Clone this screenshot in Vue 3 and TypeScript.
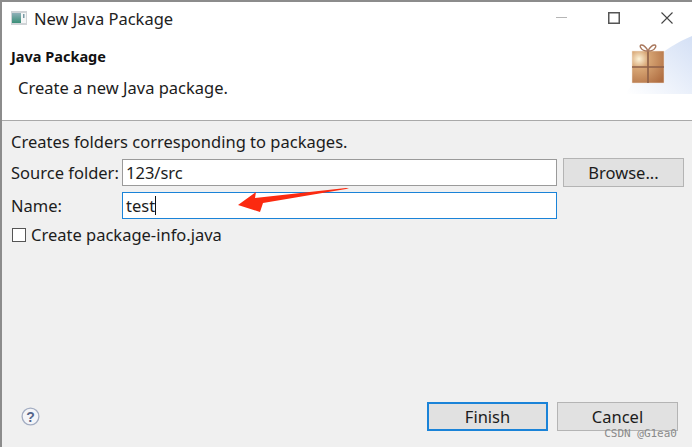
<template>
  <div class="dialog">
    <div class="titlebar">
      <svg class="app-icon" width="16" height="14" viewBox="0 0 16 14">
        <defs>
          <linearGradient id="pane" x1="0" y1="0" x2="0" y2="1">
            <stop offset="0" stop-color="#8fb0b8" />
            <stop offset="1" stop-color="#3a8f78" />
          </linearGradient>
        </defs>
        <rect x="0" y="0" width="16" height="14" fill="#cfd3d6" />
        <rect x="1" y="2" width="9" height="10" fill="url(#pane)" />
        <rect x="10" y="2" width="5" height="10" fill="#f4f6f6" />
        <rect x="12" y="3" width="1.5" height="4" fill="#7b9aa5" />
      </svg>
      <span class="title">New Java Package</span>
      <div class="win-buttons">
        <svg width="11" height="12" viewBox="0 0 11 12"><path d="M0 5.5H11" stroke="#b5b5b5" stroke-width="1" fill="none" /></svg>
        <svg width="12" height="12" viewBox="0 0 12 12"><rect x="0.75" y="0.75" width="10.5" height="10.5" fill="none" stroke="#555" stroke-width="1.5" /></svg>
        <svg width="12" height="12" viewBox="0 0 12 12"><path d="M0.5 0.5L11.5 11.5M11.5 0.5L0.5 11.5" stroke="#444" stroke-width="1.1" fill="none" /></svg>
      </div>
    </div>

    <div class="banner">
      <div class="banner-text">
        <h1>Java Package</h1>
        <p>Create a new Java package.</p>
      </div>
      <svg class="banner-art" width="66" height="60" viewBox="0 0 66 60">
        <defs>
          <linearGradient id="fade" x1="0" y1="1" x2="1" y2="0">
            <stop offset="0" stop-color="#ffffff" />
            <stop offset="1" stop-color="#d4e0f5" />
          </linearGradient>
          <radialGradient id="box" cx="0.22" cy="0.25" r="0.95">
            <stop offset="0" stop-color="#fdf3d8" />
            <stop offset="0.3" stop-color="#d9a877" />
            <stop offset="1" stop-color="#b06e42" />
          </radialGradient>
        </defs>
        <path d="M0 58C12 36 36 12 66 0V58Z" fill="url(#fade)" />
        <rect x="6" y="15" width="32" height="32" fill="url(#box)" stroke="#f3e6da" stroke-width="0.5" />
        <path d="M22 15V47M6 31H38" stroke="#8d5f48" stroke-width="1.6" fill="none" />
        <path d="M22 15C18 7 12 8 15 12C16 14 19 15 22 15C25 15 28 14 29 12C32 8 26 7 22 15Z" fill="none" stroke="#a8775c" stroke-width="1.4" />
      </svg>
    </div>

    <div class="body">
      <p class="intro">Creates folders corresponding to packages.</p>
      <div class="form">
        <label>Source folder:</label>
        <div class="field">123/src</div>
        <button class="btn browse">Browse...</button>
        <label>Name:</label>
        <div class="field focused">test<i class="caret"></i></div>
      </div>
      <div class="check">
        <span class="box"></span>
        <span>Create package-info.java</span>
      </div>

      <div class="footer">
        <svg class="help" width="19" height="19" viewBox="0 0 19 19">
          <circle cx="9.5" cy="9.5" r="8.4" fill="#f4f5f8" stroke="#a3adc2" stroke-width="1.3" />
          <text x="9.5" y="14.5" text-anchor="middle" class="help-mark">?</text>
        </svg>
        <div class="actions">
          <button class="btn primary">Finish</button>
          <button class="btn">Cancel</button>
        </div>
      </div>
    </div>

    <svg class="arrow" width="112" height="26" viewBox="0 0 112 26">
      <path d="M0 17L18 4L17 10L108 0L111 0.5L25 15L22 24Z" fill="#fb2a10" />
    </svg>
    <span class="watermark">CSDN @G1ea0</span>
  </div>
</template>

<script setup lang="ts">
</script>

<style>
html, body { margin: 0; background: #f0f0f0; }
</style>

<style scoped>
.dialog {
  position: relative;
  width: 692px;
  height: 447px;
  box-sizing: border-box;
  border-top: 2px solid #8c8c8c;
  border-left: 2px solid #8c8c8c;
  background: #f0f0f0;
  font-family: "Noto Sans", "Open Sans", sans-serif;
  font-size: 16.5px;
  color: #1c1c1c;
  overflow: hidden;
  display: flex;
  flex-direction: column;
}
.titlebar {
  height: 34px;
  box-sizing: border-box;
  padding: 0 0 2px 9px;
  background: #fff;
  display: flex;
  align-items: center;
  flex: none;
}
.app-icon { flex: none; }
.title { margin-left: 7px; color: #222; }
.win-buttons {
  margin-left: auto;
  display: flex;
  gap: 41px;
  padding-right: 19px;
}
.banner {
  height: 84px;
  background: #fff;
  border-bottom: 1px solid #a9a9a9;
  display: flex;
  flex: none;
  justify-content: space-between;
}
.banner-text { padding-left: 9px; }
h1 { margin: 9px 0 0; font-size: 14.5px; font-weight: 700; line-height: 22px; color: #111; }
p { margin: 0; }
.banner-text p { margin: 10px 0 0 7px; line-height: 22px; }
.banner-art { flex: none; }
.body {
  flex: 1;
  display: flex;
  flex-direction: column;
  padding: 10px 14px 16px 9px;
  min-height: 0;
}
.intro { line-height: 22px; }
.form {
  margin-top: 5px;
  display: grid;
  grid-template-columns: 111px 435px 121px;
  row-gap: 5px;
  align-items: center;
}
.form label { line-height: 22px; }
.field {
  box-sizing: border-box;
  height: 27px;
  border: 1px solid #9a9a9a;
  background: #fff;
  padding-left: 3px;
  display: flex;
  align-items: center;
}
.field.focused { border-color: #1a83d8; }
.caret { display: inline-block; width: 1px; height: 19px; background: #111; }
.btn {
  box-sizing: border-box;
  height: 29px;
  width: 121px;
  border: 1px solid #b4b4b4;
  background: #e1e1e1;
  font: inherit;
  color: #1c1c1c;
  padding: 0;
}
.browse { margin-left: 6px; }
.check {
  margin-top: 5px;
  margin-left: 1px;
  display: flex;
  align-items: center;
  gap: 5px;
  line-height: 22px;
}
.box {
  box-sizing: border-box;
  width: 14px;
  height: 14px;
  border: 1px solid #555;
  background: #fff;
}
.footer {
  margin-top: auto;
  display: flex;
  align-items: center;
  justify-content: space-between;
}
.help { margin-left: 10px; }
.help-mark { font-size: 14px; font-weight: 700; fill: #55658a; font-family: "Liberation Sans", sans-serif; }
.actions { display: flex; gap: 9px; }
.primary { border: 2px solid #1a83d8; }
.arrow { position: absolute; left: 236px; top: 186px; }
.watermark {
  position: absolute;
  right: 15px;
  bottom: 7px;
  font-family: "DejaVu Sans Mono", monospace;
  font-size: 11px;
  line-height: 12px;
  color: #8a8a8a;
}
</style>
